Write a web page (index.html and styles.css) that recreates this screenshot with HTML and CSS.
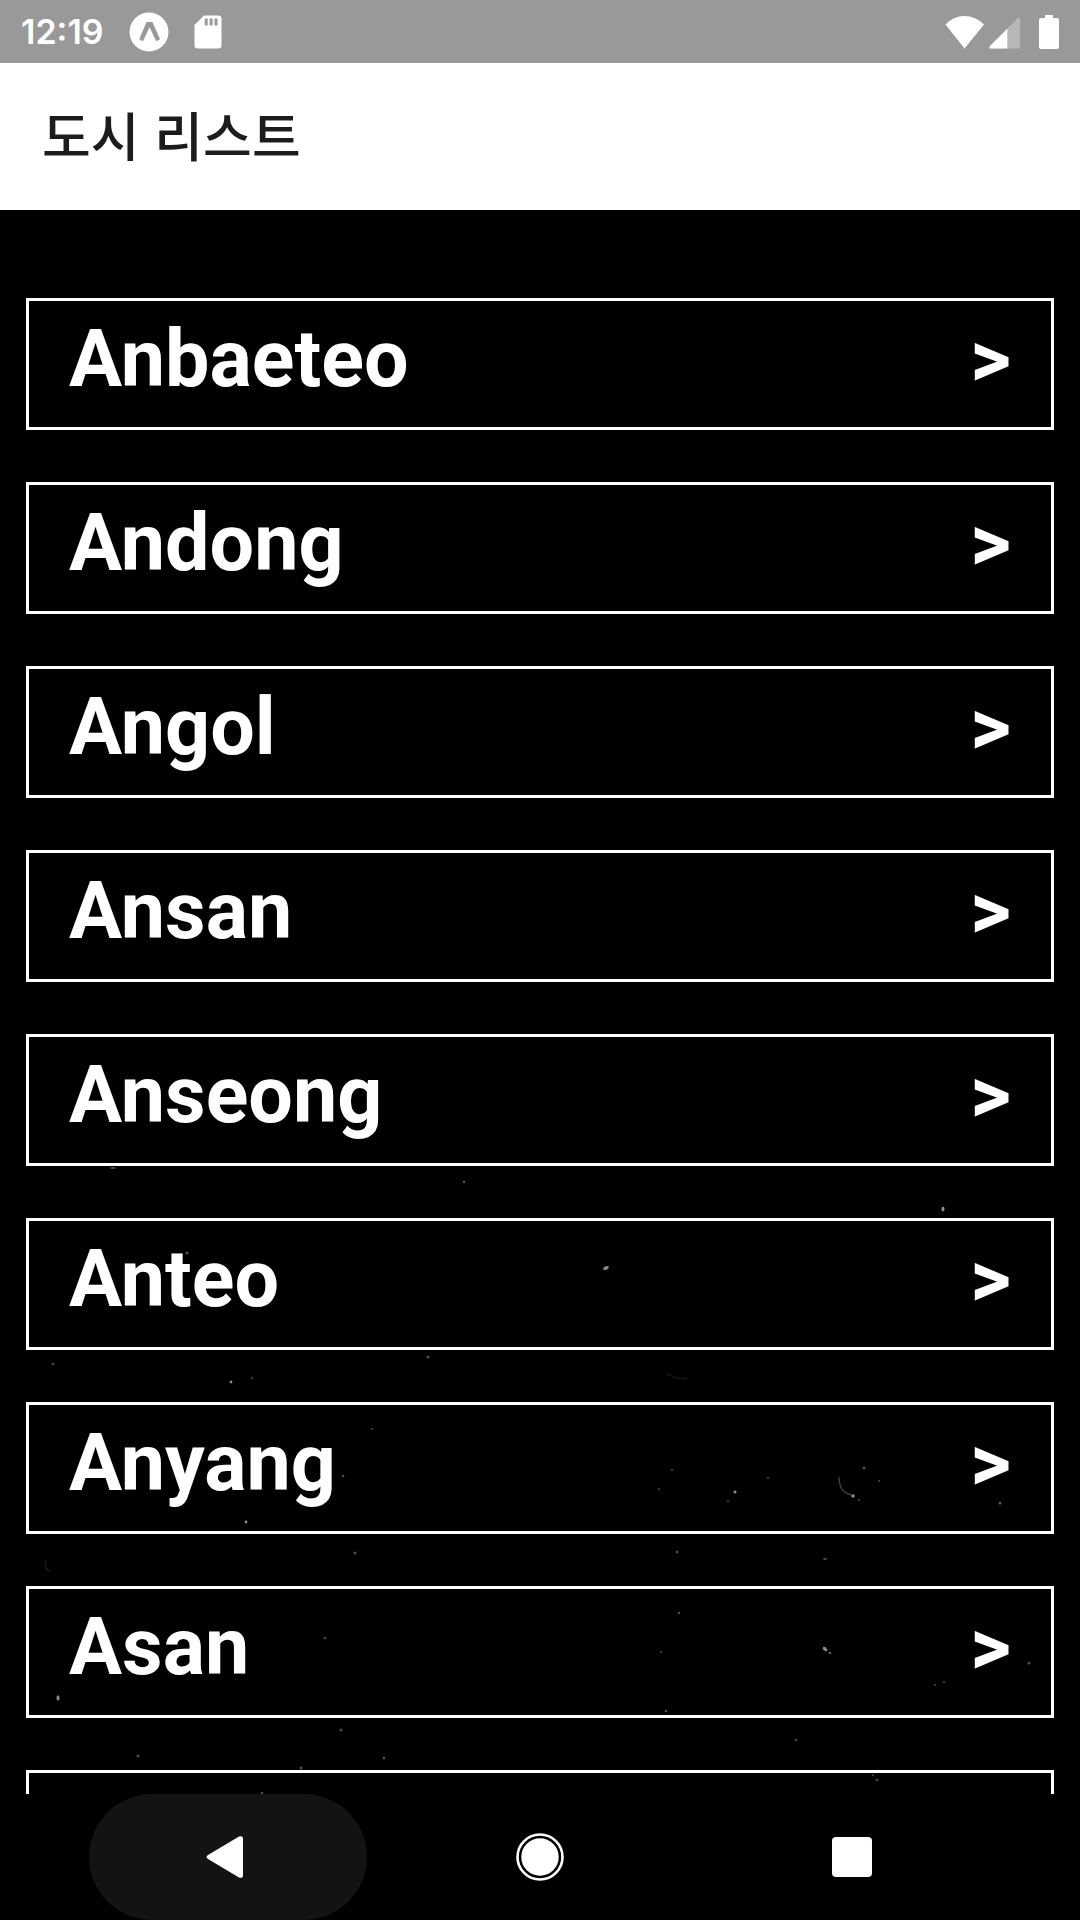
FILE: index.html
```html
<!DOCTYPE html>
<html lang="ko">
<head>
<meta charset="utf-8">
<meta name="viewport" content="width=device-width, initial-scale=1">
<title>도시 리스트</title>
<link rel="stylesheet" href="styles.css">
</head>
<body>
<div class="status-bar">
  <div class="status-group status-left">
    <span class="clock">12:19</span>
    <svg class="icon-app" width="40" height="40" viewBox="0 0 40 40" aria-hidden="true"><circle cx="20" cy="20" r="19.5" fill="#fff"/><path d="M17.5 10h6l7.500 17.300-3.800 1.900-6.600-14-6.700 14-3.700-1.900z" fill="#999"/></svg>
    <svg class="icon-sd" width="28" height="34" viewBox="0 0 28 34" aria-hidden="true"><path d="M10 .5h14.500a3 3 0 0 1 3 3v27a3 3 0 0 1-3 3h-21a3 3 0 0 1-3-3V10z" fill="#fff"/><path d="M10.700 3.500h3v7h-3zM15.600 3.500h3v7h-3zM20.500 3.500h3v7h-3z" fill="#999"/></svg>
  </div>
  <div class="status-group status-right">
    <svg width="40" height="34" viewBox="0 0 40 34" aria-hidden="true"><path d="M.5 9.500Q8.500 1 19.500 1T39 9.500L19.500 33.500z" fill="#fff"/></svg>
    <svg class="icon-signal" width="32" height="34" viewBox="0 0 32 34" aria-hidden="true"><path d="M1 31 29 3q2-1.500 2 1v28q0 1.500-1.500 1.500H1.500Q-.5 33.500 1 31z" fill="#b8b8b8"/><path d="M18.300 13.700V33.500H1.500Q-.5 33.500 1 31z" fill="#fff"/></svg>
    <svg class="icon-battery" width="20" height="34" viewBox="0 0 20 34" aria-hidden="true"><path d="M6 0h8v3h4q2 0 2 2v27q0 2-2 2H2q-2 0-2-2V5q0-2 2-2h4z" fill="#fff"/></svg>
  </div>
</div>
<header class="app-header"><h1>도시 리스트</h1></header>
<main class="screen">
  <svg class="sky" viewBox="0 0 1080 1584" preserveAspectRatio="xMidYMin slice" aria-hidden="true">
    <g fill="#8b8b92">
      <ellipse cx="943" cy="999" rx="1.500" ry="2.500"/><ellipse cx="606" cy="1058" rx="3" ry="1.700" transform="rotate(-25 606 1058)"/>
      <circle cx="735" cy="1282" r="1.500"/><circle cx="853" cy="1286" r="1.700"/><circle cx="231" cy="1172" r="1.400"/>
      <circle cx="246" cy="1312" r="1.400"/><ellipse cx="58" cy="1488" rx="1.500" ry="2.700"/>
      <ellipse cx="825" cy="1439" rx="2.700" ry="1.700" transform="rotate(40 825 1439)"/><circle cx="830" cy="1443" r="1"/>
    </g>
    <g fill="#4c4c52">
      <circle cx="864" cy="1258" r="1.500"/><circle cx="879" cy="1271" r="1"/><circle cx="768" cy="1268" r="1"/>
      <circle cx="859" cy="1290" r="1"/><circle cx="1000" cy="1293" r="1.500"/><circle cx="677" cy="1342" r="1.300"/>
      <ellipse cx="825" cy="1349" rx="2" ry="1"/><circle cx="679" cy="1403" r="1.300"/><circle cx="661" cy="1442" r="1"/>
      <circle cx="1029" cy="1453" r="1.500"/><circle cx="428" cy="1147" r="1.500"/><circle cx="252" cy="1168" r="1"/>
      <circle cx="53" cy="1154" r="1.300"/><circle cx="343" cy="1266" r="1.300"/><circle cx="355" cy="1343" r="1.500"/>
      <circle cx="372" cy="1219" r="1"/><circle cx="325" cy="1428" r="1.300"/><circle cx="341" cy="1520" r="1.500"/>
      <circle cx="138" cy="1546" r="1.500"/><circle cx="384" cy="1548" r="1.500"/><circle cx="301" cy="1558" r="1.500"/>
      <circle cx="262" cy="1583" r="1.300"/><circle cx="873" cy="1565" r="1"/><circle cx="877" cy="1570" r="1.300"/>
      <circle cx="659" cy="1279" r="1"/><circle cx="672" cy="1260" r="1"/><circle cx="728" cy="1291" r="1"/>
      <circle cx="935" cy="1475" r="1"/><circle cx="944" cy="1472" r="1"/><circle cx="666" cy="1501" r="1.300"/>
      <circle cx="796" cy="1530" r="1.300"/><circle cx="464" cy="972" r="1.300"/><circle cx="187" cy="1043" r="1.500"/>
      <ellipse cx="113" cy="958" rx="3" ry="1"/>
    </g>
    <g fill="none" stroke="#3a3a40" stroke-width="1.500">
      <path d="M839 1267q0 16 13 18"/><path d="M46 1351q-2 9 4 10" stroke="#1c1c20"/><path d="M667 1163q7 7 20 5" stroke="#16161a"/>
    </g>
  </svg>
  <ul class="city-list">
    <li><a class="city" href="#anbaeteo"><span class="city-name">Anbaeteo</span><span class="arrow">&gt;</span></a></li>
    <li><a class="city" href="#andong"><span class="city-name">Andong</span><span class="arrow">&gt;</span></a></li>
    <li><a class="city" href="#angol"><span class="city-name">Angol</span><span class="arrow">&gt;</span></a></li>
    <li><a class="city" href="#ansan"><span class="city-name">Ansan</span><span class="arrow">&gt;</span></a></li>
    <li><a class="city" href="#anseong"><span class="city-name">Anseong</span><span class="arrow">&gt;</span></a></li>
    <li><a class="city" href="#anteo"><span class="city-name">Anteo</span><span class="arrow">&gt;</span></a></li>
    <li><a class="city" href="#anyang"><span class="city-name">Anyang</span><span class="arrow">&gt;</span></a></li>
    <li><a class="city" href="#asan"><span class="city-name">Asan</span><span class="arrow">&gt;</span></a></li>
    <li><a class="city" href="#more"></a></li>
  </ul>
</main>
<nav class="nav-bar">
  <button class="nav-button pressed" type="button" aria-label="뒤로"><svg width="48" height="48" viewBox="0 0 48 48"><path d="M4 22 35 3.600Q39 2 39 6V42Q39 46 35 44.400L4 26Q1 24 4 22z" fill="#fff"/></svg></button>
  <button class="nav-button" type="button" aria-label="홈"><svg width="48" height="48" viewBox="0 0 48 48"><circle cx="24" cy="24" r="22.500" fill="none" stroke="#fff" stroke-width="2.600"/><circle cx="24" cy="24" r="18.700" fill="#fff"/></svg></button>
  <button class="nav-button" type="button" aria-label="최근 앱"><svg width="48" height="48" viewBox="0 0 48 48"><rect x="4" y="4" width="40" height="40" rx="4" fill="#fff"/></svg></button>
</nav>
</body>
</html>
```
FILE: styles.css
```css
* {
  box-sizing: border-box;
}

body {
  display: flex;
  flex-direction: column;
  height: 100vh;
  margin: 0;
  background: #000;
  color: #fff;
  font-family: Roboto, "Noto Sans CJK KR", sans-serif;
}

.status-bar {
  display: flex;
  flex: none;
  align-items: center;
  justify-content: space-between;
  height: 63px;
  padding: 0 21px;
  background: #999;
}

.status-group {
  display: flex;
  align-items: center;
}

.status-left {
  gap: 25px;
}

.status-right {
  gap: 4px;
}

.icon-battery {
  margin-left: 14px;
}

.clock {
  font: 600 34px/40px Inter, sans-serif;
}

.app-header {
  display: flex;
  flex: none;
  align-items: center;
  height: 147px;
  padding: 0 42px 6px;
  background: #fff;
}

.app-header h1 {
  margin: 0;
  color: #1c1c1c;
  font: 500 53px/64px "Noto Sans CJK KR", sans-serif;
}

.screen {
  position: relative;
  flex: 1;
  min-height: 0;
  overflow: hidden;
}

.sky {
  position: absolute;
  inset: 0;
  width: 100%;
  height: 100%;
}

.city-list {
  position: relative;
  display: flex;
  flex-direction: column;
  gap: 52px;
  margin: 0;
  padding: 88px 26px 52px;
  list-style: none;
}

.city {
  display: flex;
  justify-content: space-between;
  height: 132px;
  padding: 12px 40px;
  border: 3px solid #fff;
  color: #fff;
  font-size: 79px;
  font-weight: 700;
  line-height: 92px;
  text-decoration: none;
}

.nav-bar {
  display: flex;
  flex: none;
  justify-content: center;
  gap: 34px;
  height: 126px;
  background: #000;
}

.nav-button {
  display: flex;
  align-items: center;
  justify-content: center;
  width: 278px;
  padding: 0;
  border: 0;
  border-radius: 63px;
  background: none;
}

.nav-button.pressed {
  background: #131313;
}
```
